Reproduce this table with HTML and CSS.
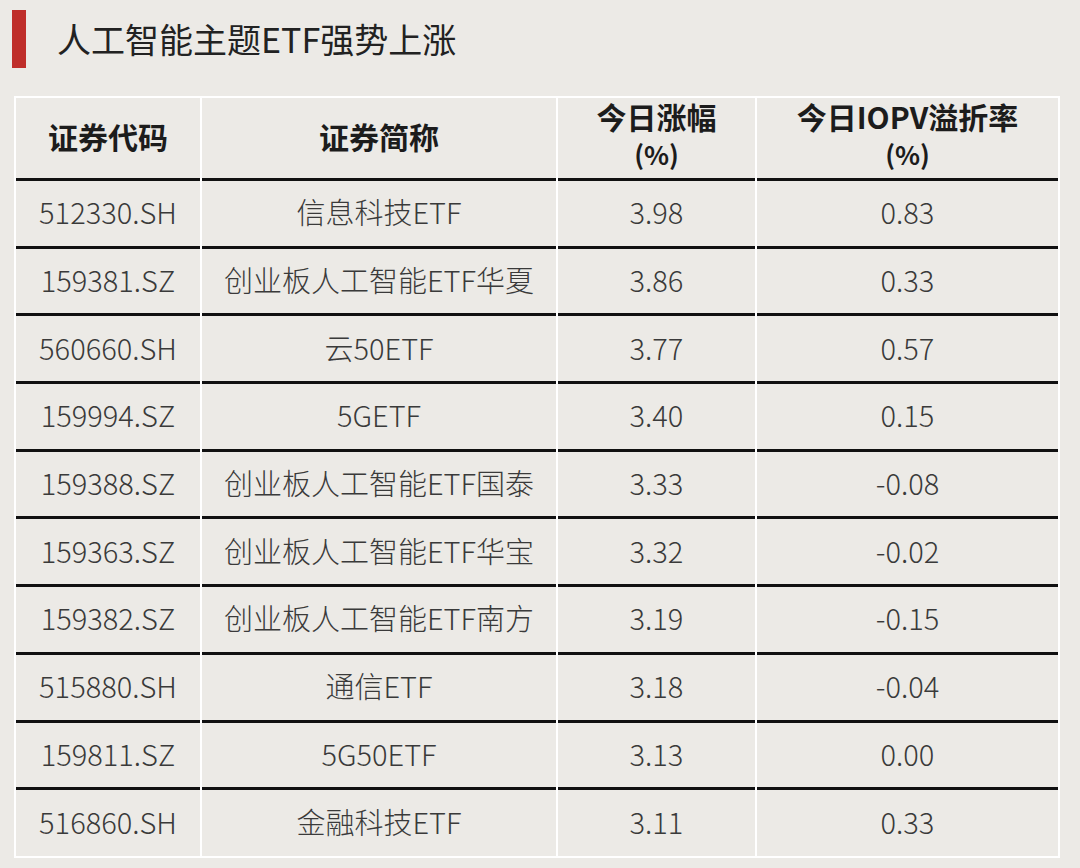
FILE: index.html
```html
<!DOCTYPE html>
<html lang="zh-CN">
<head>
<meta charset="utf-8">
<title>人工智能主题ETF强势上涨</title>
<link rel="stylesheet" href="styles.css">
</head>
<body>
<div class="page">
  <div class="title-row">
    <div class="title-bar"></div>
    <h1 class="title">人工智能主题ETF强势上涨</h1>
  </div>
  <div class="table">
    <div class="cell head">证券代码</div>
    <div class="cell head">证券简称</div>
    <div class="cell head two"><span>今日涨幅</span><span class="pct">(%)</span></div>
    <div class="cell head two"><span>今日IOPV溢折率</span><span class="pct">(%)</span></div>

    <div class="cell">512330.SH</div><div class="cell">信息科技ETF</div><div class="cell">3.98</div><div class="cell">0.83</div>
    <div class="cell">159381.SZ</div><div class="cell">创业板人工智能ETF华夏</div><div class="cell">3.86</div><div class="cell">0.33</div>
    <div class="cell">560660.SH</div><div class="cell">云50ETF</div><div class="cell">3.77</div><div class="cell">0.57</div>
    <div class="cell">159994.SZ</div><div class="cell">5GETF</div><div class="cell">3.40</div><div class="cell">0.15</div>
    <div class="cell">159388.SZ</div><div class="cell">创业板人工智能ETF国泰</div><div class="cell">3.33</div><div class="cell">-0.08</div>
    <div class="cell">159363.SZ</div><div class="cell">创业板人工智能ETF华宝</div><div class="cell">3.32</div><div class="cell">-0.02</div>
    <div class="cell">159382.SZ</div><div class="cell">创业板人工智能ETF南方</div><div class="cell">3.19</div><div class="cell">-0.15</div>
    <div class="cell">515880.SH</div><div class="cell">通信ETF</div><div class="cell">3.18</div><div class="cell">-0.04</div>
    <div class="cell">159811.SZ</div><div class="cell">5G50ETF</div><div class="cell">3.13</div><div class="cell">0.00</div>
    <div class="cell last">516860.SH</div><div class="cell last">金融科技ETF</div><div class="cell last">3.11</div><div class="cell last">0.33</div>
  </div>
</div>
</body>
</html>
```

FILE: styles.css
```css
html, body {
  margin: 0;
  padding: 0;
  background: #ECEAE6;
}
body {
  font-family: "Noto Sans CJK SC", "Noto Sans", sans-serif;
  color: #333;
}
.page {
  width: 1080px;
  height: 868px;
  box-sizing: border-box;
  padding: 10px 0 0 0;
}
.title-row {
  display: flex;
  align-items: center;
  height: 58px;
  padding-left: 12px;
}
.title-bar {
  width: 14px;
  height: 58px;
  background: #BF2E2A;
}
.title {
  margin: 0 0 0 31px;
  font-size: 34px;
  font-weight: 400;
  color: #222;
  line-height: 58px;
}
.table {
  margin: 28px 0 0 14px;
  width: 1046px;
  box-sizing: border-box;
  background: #FFFFFF;
  padding: 2px;
  display: grid;
  grid-template-columns: 184px 354px 197px 301px;
  grid-template-rows: 83px repeat(9, 67.7px) 66px;
  column-gap: 2px;
}
.cell {
  background: #ECEAE6;
  border-bottom: 3px solid #111;
  display: flex;
  align-items: center;
  justify-content: center;
  font-size: 29px;
  font-weight: 300;
  color: #3a3a3a;
  line-height: 1;
  box-sizing: border-box;
  padding-bottom: 3px;
}
.cell.last {
  border-bottom: none;
}
.head {
  font-weight: 700;
  color: #1c1c1c;
  font-size: 30px;
  padding-bottom: 5px;
}
.head.two {
  flex-direction: column;
  line-height: 37px;
  padding-bottom: 6px;
}
.pct {
  font-size: 26px;
}
```
